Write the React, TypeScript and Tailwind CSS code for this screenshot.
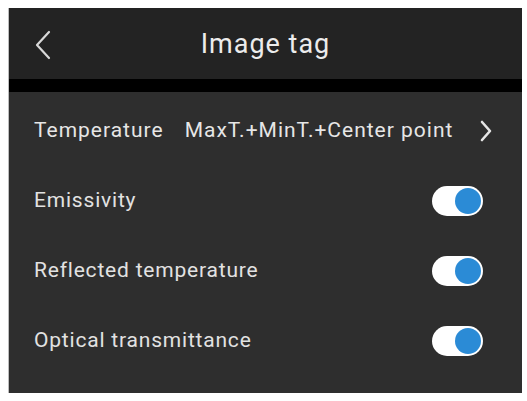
import React from "react";

const rows = ["Emissivity", "Reflected temperature", "Optical transmittance"];

function Toggle() {
  return (
    <div className="flex h-[30px] w-[51px] items-center justify-end rounded-full bg-white pr-[2px]">
      <div className="h-[26px] w-[26px] rounded-full bg-[#2b8bd6]" />
    </div>
  );
}

export default function App() {
  return (
    <div
      className="h-[401px] w-[527px] bg-white pl-[8px] pr-[5px] pt-[8px] pb-[8px]"
      style={{ fontFamily: "Roboto, 'Liberation Sans', sans-serif" }}
    >
      <div className="flex h-full flex-col border-l-[1px] border-[#bdbdbd] bg-[#2e2e2e]">
        {/* header */}
        <div className="relative flex h-[71px] items-center justify-center bg-[#232323]">
          <svg
            className="absolute left-[21px] top-[22px]"
            width="24"
            height="30"
            viewBox="0 0 24 30"
            fill="none"
          >
            <path d="M19 2 L7 15 L19 28" stroke="#d8d8d8" strokeWidth="2.2" strokeLinecap="round" strokeLinejoin="round" />
          </svg>
          <span className="pt-[2px] text-[27px] tracking-[1px] text-[#ececec]">Image tag</span>
        </div>
        <div className="h-[13px] bg-black" />

        {/* list */}
        <div className="flex flex-col pl-[25px] pr-[30px] pt-[4px]">
          <div className="flex h-[70px] items-center text-[21px] tracking-[1px] text-[#e6e6e6]">
            <span>Temperature</span>
            <span className="ml-[21px]">MaxT.+MinT.+Center point</span>
            <svg className="ml-auto" width="12" height="22" viewBox="0 0 12 22" fill="none">
              <path d="M2 2 L10 11 L2 20" stroke="#e6e6e6" strokeWidth="2.6" strokeLinecap="round" strokeLinejoin="round" />
            </svg>
          </div>
          {rows.map((r) => (
            <div key={r} className="flex h-[70px] items-center justify-between text-[21px] tracking-[0.8px] text-[#e2e2e2]">
              <span>{r}</span>
              <div className="mr-[9px]">
                <Toggle />
              </div>
            </div>
          ))}
        </div>
      </div>
    </div>
  );
}
